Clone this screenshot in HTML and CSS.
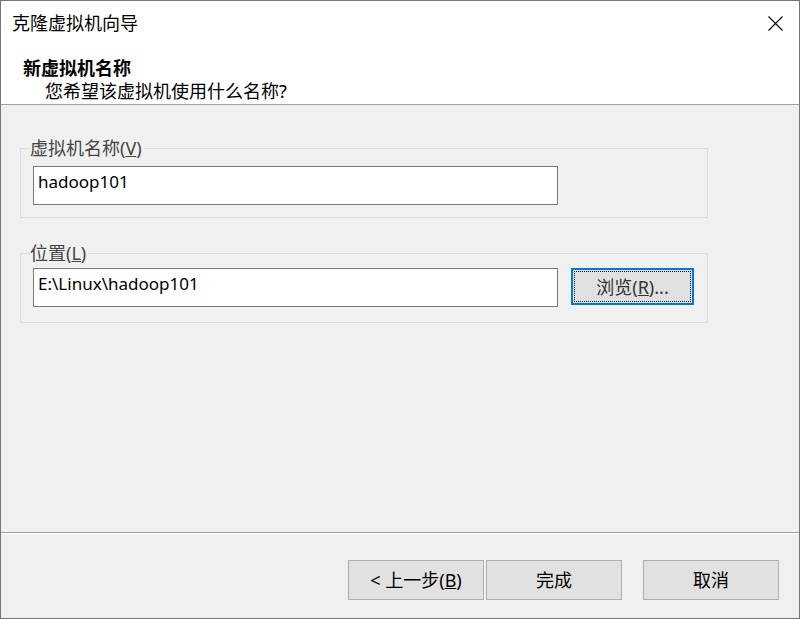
FILE: index.html
```html
<!DOCTYPE html>
<html lang="zh-CN">
<head>
<meta charset="utf-8">
<title>克隆虚拟机向导</title>
<link rel="stylesheet" href="styles.css">
</head>
<body>
<div class="window">
  <div class="titlebar">
    <span class="title">克隆虚拟机向导</span>
    <svg class="close" width="15" height="15" viewBox="0 0 15 15" aria-hidden="true">
      <path d="M0.5 0.5 L14.5 14.5 M14.5 0.5 L0.5 14.5" stroke="#000" stroke-width="1.1" fill="none"/>
    </svg>
  </div>
  <div class="header">
    <div class="h-title">新虚拟机名称</div>
    <div class="h-sub">您希望该虚拟机使用什么名称?</div>
  </div>
  <div class="content">
    <fieldset class="group group-name">
      <legend>虚拟机名称(<u>V</u>)</legend>
      <div class="field">hadoop101</div>
    </fieldset>
    <fieldset class="group group-loc">
      <legend>位置(<u>L</u>)</legend>
      <div class="row">
        <div class="field">E:\Linux\hadoop101</div>
        <div class="browse"><span class="focus">浏览(<u>R</u>)...</span></div>
      </div>
    </fieldset>
  </div>
  <div class="footer">
    <div class="btn">&lt; 上一步(<u>B</u>)</div>
    <div class="btn btn-finish">完成</div>
    <div class="btn btn-cancel">取消</div>
  </div>
</div>
</body>
</html>
```
FILE: styles.css
```css
html, body {
  margin: 0;
  padding: 0;
}
body {
  font-family: "Noto Sans", "Noto Sans CJK SC", sans-serif;
  font-size: 18px;
  color: #000;
  background: #f0f0f0;
}
.window {
  width: 800px;
  height: 619px;
  box-sizing: border-box;
  border: 1px solid #767676;
  display: flex;
  flex-direction: column;
  background: #f0f0f0;
  overflow: hidden;
}
.titlebar {
  height: 44px;
  background: #fff;
  display: flex;
  align-items: center;
  justify-content: space-between;
  padding-left: 11px;
}
.title {
  line-height: 22px;
}
.close {
  margin-right: 16px;
  display: block;
}
.header {
  background: #fff;
  height: 46px;
  padding: 12px 0 1px 22px;
  border-bottom: 1px solid #a0a0a0;
}
.h-title {
  font-weight: bold;
  line-height: 23px;
}
.h-sub {
  line-height: 23px;
  padding-left: 22px;
}
.content {
  flex: 1;
  padding: 32px 0 0 19px;
  display: flex;
  flex-direction: column;
  gap: 24px;
}
.group {
  margin: 0;
  width: 688px;
  box-sizing: border-box;
  border: 1px solid #dcdcdc;
  padding: 0 12px;
  min-width: 0;
}
.group legend {
  padding: 0 2px 0 0;
  margin-left: -3px;
  line-height: 22px;
  color: #444;
}
.group-name {
  padding-top: 7px;
  padding-bottom: 12px;
}
.group-loc {
  padding-top: 4px;
  padding-bottom: 15px;
}
.field {
  width: 525px;
  height: 39px;
  box-sizing: border-box;
  border: 1px solid #7a7a7a;
  background: #fff;
  padding: 0 4px;
  line-height: 30px;
  font-size: 17px;
}
.row {
  display: flex;
  align-items: flex-start;
  gap: 13px;
}
.browse {
  width: 123px;
  height: 37px;
  box-sizing: border-box;
  border: 2px solid #0078d7;
  background: #e1e1e1;
  padding: 1px;
}
.focus {
  display: flex;
  align-items: center;
  justify-content: center;
  height: 100%;
  box-sizing: border-box;
  border: 1px dotted #000;
  color: #333;
  line-height: 22px;
}
.footer {
  height: 86px;
  box-sizing: border-box;
  border-top: 1px solid #a0a0a0;
  box-shadow: inset 0 1px 0 #fff;
  padding: 27px 20px 0 0;
  display: flex;
  justify-content: flex-end;
  align-items: flex-start;
}
.btn {
  width: 136px;
  height: 40px;
  box-sizing: border-box;
  border: 1px solid #adadad;
  background: #e1e1e1;
  display: flex;
  align-items: center;
  justify-content: center;
  line-height: 22px;
}
.btn-finish {
  margin-left: 2px;
}
.btn-cancel {
  margin-left: 21px;
}
```
